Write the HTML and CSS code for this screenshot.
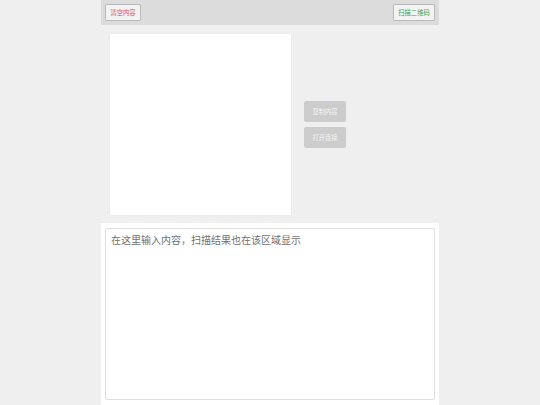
FILE: index.html
```html
<!DOCTYPE html>
<html lang="zh">
<head>
<meta charset="utf-8">
<title>二维码</title>
<link rel="stylesheet" href="styles.css">
</head>
<body>
<div class="app">
  <header class="toolbar">
    <button class="tb-btn tb-clear">清空内容</button>
    <button class="tb-btn tb-scan">扫描二维码</button>
  </header>
  <section class="main">
    <div class="qr-box"></div>
    <div class="actions">
      <button class="act-btn">复制内容</button>
      <button class="act-btn">打开连接</button>
    </div>
  </section>
  <section class="input-area">
    <textarea class="content" placeholder="在这里输入内容，扫描结果也在该区域显示"></textarea>
  </section>
</div>
</body>
</html>
```

FILE: styles.css
```css
html, body {
  margin: 0;
  padding: 0;
  background: #efefef;
  font-family: "Noto Sans CJK SC", "Noto Sans", sans-serif;
}
.app {
  width: 338px;
  margin: 0 auto;
}
.toolbar {
  height: 25px;
  box-sizing: border-box;
  background: #dcdcdc;
  padding: 4px 4px;
  display: flex;
  justify-content: space-between;
  align-items: flex-start;
}
.tb-btn {
  height: 17px;
  box-sizing: border-box;
  margin: 0;
  padding: 0 4px;
  border: 1px solid #b9b9b9;
  border-radius: 1px;
  background: #f3f3f3;
  font-family: inherit;
  font-size: 6.3px;
  line-height: 15px;
}
.tb-clear { color: #e2504f; width: 36px; }
.tb-scan { color: #46a046; width: 42px; }
.main {
  height: 198px;
  box-sizing: border-box;
  padding: 9px 0 8px 9px;
  display: flex;
  align-items: center;
}
.qr-box {
  width: 181px;
  height: 181px;
  background: #fff;
  box-shadow: 0 0 1px rgba(0,0,0,0.08);
}
.actions {
  margin-left: 13px;
  display: flex;
  flex-direction: column;
  gap: 5px;
}
.act-btn {
  width: 42px;
  height: 21px;
  margin: 0;
  padding: 0;
  border: none;
  border-radius: 2px;
  background: #cccccc;
  color: #f4f4f4;
  font-family: inherit;
  font-size: 6.3px;
}
.input-area {
  background: #fff;
  padding: 5px 4px 5px 4px;
  height: 182px;
  box-sizing: border-box;
}
.content {
  display: block;
  width: 100%;
  height: 172px;
  box-sizing: border-box;
  border: 1px solid #dedede;
  border-radius: 2px;
  padding: 3px 5px;
  margin: 0;
  resize: none;
  font-family: inherit;
  font-size: 10px;
  line-height: 16px;
  color: #555;
  outline: none;
}
.content::placeholder {
  color: #707070;
}
```
